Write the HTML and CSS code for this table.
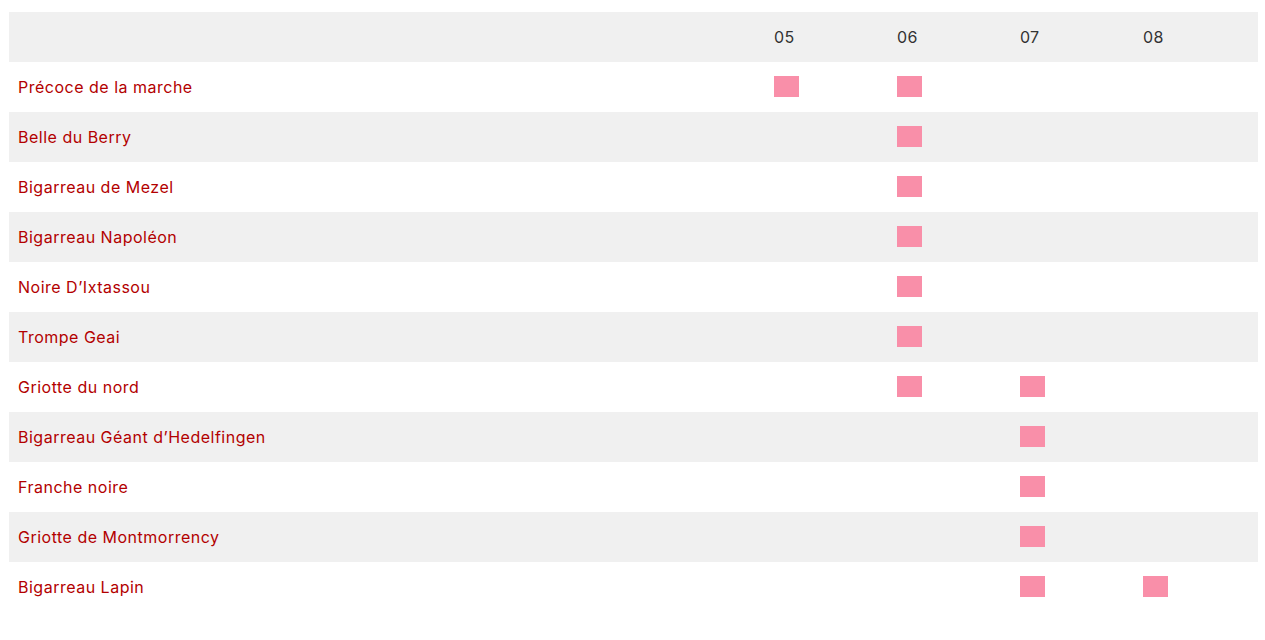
FILE: index.html
```html
<!DOCTYPE html>
<html lang="fr">
<head>
<meta charset="utf-8">
<title>Calendrier</title>
<link rel="stylesheet" href="styles.css">
</head>
<body>
<table class="cal">
  <thead>
    <tr><th class="name"></th><th>05</th><th>06</th><th>07</th><th>08</th></tr>
  </thead>
  <tbody>
    <tr><td class="name">Précoce de la marche</td><td><span class="m"></span></td><td><span class="m"></span></td><td></td><td></td></tr>
    <tr><td class="name">Belle du Berry</td><td></td><td><span class="m"></span></td><td></td><td></td></tr>
    <tr><td class="name">Bigarreau de Mezel</td><td></td><td><span class="m"></span></td><td></td><td></td></tr>
    <tr><td class="name">Bigarreau Napoléon</td><td></td><td><span class="m"></span></td><td></td><td></td></tr>
    <tr><td class="name">Noire D’Ixtassou</td><td></td><td><span class="m"></span></td><td></td><td></td></tr>
    <tr><td class="name">Trompe Geai</td><td></td><td><span class="m"></span></td><td></td><td></td></tr>
    <tr><td class="name">Griotte du nord</td><td></td><td><span class="m"></span></td><td><span class="m"></span></td><td></td></tr>
    <tr><td class="name">Bigarreau Géant d’Hedelfingen</td><td></td><td></td><td><span class="m"></span></td><td></td></tr>
    <tr><td class="name">Franche noire</td><td></td><td></td><td><span class="m"></span></td><td></td></tr>
    <tr><td class="name">Griotte de Montmorrency</td><td></td><td></td><td><span class="m"></span></td><td></td></tr>
    <tr><td class="name">Bigarreau Lapin</td><td></td><td></td><td><span class="m"></span></td><td><span class="m"></span></td></tr>
  </tbody>
</table>
</body>
</html>
```

FILE: styles.css
```css
html, body {
  margin: 0;
  padding: 0;
  background: #fff;
}
body {
  padding: 12px 7px 0 9px;
  font-family: Inter, "Noto Sans", sans-serif;
  font-size: 16px;
}
.cal {
  width: 1249px;
  border-collapse: collapse;
  table-layout: fixed;
}
.cal th, .cal td {
  height: 50px;
  padding: 0 8px;
  box-sizing: border-box;
  text-align: left;
  vertical-align: top;
  padding-top: 14px;
  width: 123px;
}
.cal th.name, .cal td.name {
  width: 757px;
  padding-left: 9px;
}
.cal th, .cal td.name {
  vertical-align: middle;
  padding-top: 0;
}
.cal thead tr {
  background: #f0f0f0;
}
.cal th {
  font-weight: 400;
  color: #333;
  letter-spacing: 0.3px;
}
.cal tbody tr:nth-child(even) {
  background: #f0f0f0;
}
.cal td.name {
  color: #b30000;
  letter-spacing: 0.5px;
}
.m {
  display: block;
  width: 25px;
  height: 21px;
  background: #f98fa9;
}
```
